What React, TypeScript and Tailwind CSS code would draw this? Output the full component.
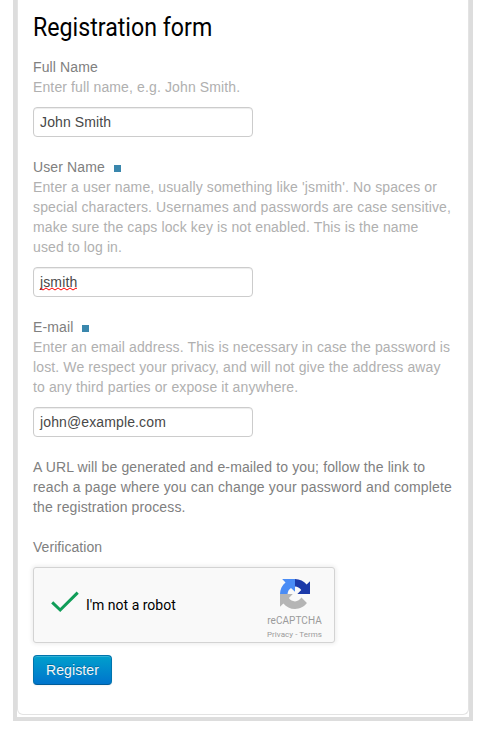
import type { ReactNode } from "react";

function Field({ label, required, help, value, misspelled, className = "" }: {
  label: string;
  required?: boolean;
  help: ReactNode;
  value: string;
  misspelled?: boolean;
  className?: string;
}) {
  return (
    <div className={className}>
      <div className="flex h-5 items-center text-[#808080]">
        <span>{label}</span>
        {required && <span className="mt-[3px] ml-[9px] size-[7px] bg-[#3a87ad]" />}
      </div>
      <p className="whitespace-nowrap text-[#b0b0b0]">{help}</p>
      <div className="mt-[10px] flex h-[30px] w-[220px] items-center rounded border border-[#ccc] bg-white px-[6px] text-[#484848] shadow-[inset_0_1px_1px_rgba(0,0,0,0.075)]">
        <span className="relative">
          {value}
          {misspelled && (
            <svg className="absolute top-[15px] left-0" width="37" height="4" viewBox="0 0 37 4" fill="none" stroke="#f00" strokeWidth="1">
              <path d="M0 1L3 3L6 1L9 3L12 1L15 3L18 1L21 3L24 1L27 3L30 1L33 3L36 1L37 1.6" />
            </svg>
          )}
        </span>
      </div>
    </div>
  );
}

function Recaptcha() {
  return (
    <div className="flex h-[76px] w-[302px] justify-between rounded-[3px] border border-[#d3d3d3] bg-[#f9f9f9] tracking-normal shadow-[0_0_4px_1px_rgba(0,0,0,0.08)]">
      <div className="flex items-center pl-[17px] font-[Roboto,sans-serif] text-black">
        <svg className="-mt-[7px]" width="28" height="22" viewBox="0 0 28 22" fill="none" stroke="#0f9d58" strokeWidth="3">
          <path d="M1.2 11.4L9.2 19L26.7 1.6" />
        </svg>
        <span className="ml-[7px] text-sm">I'm not a robot</span>
      </div>
      <div className="flex w-[80px] flex-col items-center pt-[11px] font-[Roboto,sans-serif] text-[#9b9b9b]">
        <svg className="ml-[2px]" width="30" height="30" viewBox="0 0 64 64">
          <path fill="#1c3aa9" d="M32 0C42 0 51 4.7 56.8 11.8L64 4.7V32H37L45.3 23.5C42 19 37 16.4 32 16.2Z" />
          <path fill="#4a8cf5" d="M32 0H4.6L11.8 7.2C4.6 13.1 0 22 0 32H16.1C16.4 26.5 19 22 23.4 19L32 27Z" />
          <path fill="#b5b5b5" d="M0 32V59.3L7.2 52.2C13.1 59.3 22 64 32 64C42.4 64 51.6 59 57.4 51.4L45.7 39.5C42.5 44.5 37.5 47.8 32 47.8C26.5 47.5 22 45 19 40.5L27.3 32Z" />
        </svg>
        <span className="mt-[6px] ml-[1px] text-[10px] leading-[12px] tracking-[0.08px]">reCAPTCHA</span>
        <span className="mt-[3px] ml-[1px] text-[8px] leading-[10px] tracking-[0.05px]">Privacy - Terms</span>
      </div>
    </div>
  );
}

export default function App() {
  return (
    <div className="h-[735px] w-[488px] bg-white pl-[13px] font-['Liberation_Sans',Arial,sans-serif] text-sm leading-5 tracking-[0.125px]">
      <div className="h-[721px] w-[460px] border-x-4 border-b-4 border-[#ddd]">
        <div className="h-[715px] w-[452px] rounded-b-md border-x border-b border-[#e3e3e3] pt-[10px] pl-[15px]">
          <h1 className="h-[37px] w-max origin-left scale-x-[0.927] font-[Roboto,sans-serif] text-[25px] leading-[35px] tracking-normal text-black">Registration form</h1>
          <div className="mt-[10px]">
            <Field label="Full Name" help="Enter full name, e.g. John Smith." value="John Smith" />
            <Field
              className="mt-5"
              label="User Name"
              required
              help={<>Enter a user name, usually something like 'jsmith'. No spaces or<br />special characters. Usernames and passwords are case sensitive,<br />make sure the caps lock key is not enabled. This is the name<br />used to log in.</>}
              value="jsmith"
              misspelled
            />
            <Field
              className="mt-5"
              label="E-mail"
              required
              help={<>Enter an email address. This is necessary in case the password is<br />lost. We respect your privacy, and will not give the address away<br />to any third parties or expose it anywhere.</>}
              value="john@example.com"
            />
          </div>
          <p className="mt-5 whitespace-nowrap text-[#808080]">
            <span className="tracking-[0.13px]">A URL will be generated and e-mailed to you; follow the link to</span><br />
            <span className="tracking-[0.16px]">reach a page where you can change your password and complete</span><br />
            the registration process.
          </p>
          <p className="mt-5 mb-[10px] tracking-[0.05px] text-[#808080]">Verification</p>
          <Recaptcha />
          <button className="mt-3 block h-[30px] w-[79px] rounded border border-[#0074ad] border-b-[#005c99] bg-linear-to-b from-[#009fcc] to-[#0074cc] text-[#f5f5f5] shadow-[inset_0_1px_0_rgba(255,255,255,0.2),0_1px_2px_rgba(0,0,0,0.05)] [text-shadow:0_-1px_0_rgba(0,0,0,0.25)]">
            Register
          </button>
        </div>
      </div>
    </div>
  );
}
